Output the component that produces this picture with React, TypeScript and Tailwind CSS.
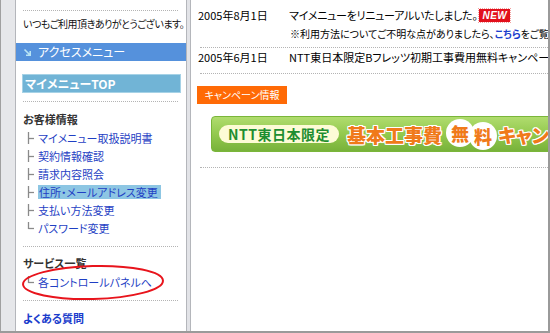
import React from 'react';

const jp = "font-['Noto_Sans_CJK_JP','Noto_Sans',sans-serif] [font-feature-settings:'palt']";

const menuItems = [
  { label: 'マイメニュー取扱説明書' },
  { label: '契約情報確認' },
  { label: '請求内容照会' },
  { label: '住所・メールアドレス変更', active: true },
  { label: '支払い方法変更' },
  { label: 'パスワード変更', last: true },
];

const Tree: React.FC<{ last?: boolean }> = ({ last }) => (
  <svg width="9" height="12" viewBox="0 0 9 12" className="shrink-0">
    <line x1="1.5" y1="0" x2="1.5" y2={last ? 7 : 12} stroke="#8a8a8a" strokeWidth="1.3" />
    <line x1="1.5" y1="6.5" x2="7" y2="6.5" stroke="#8a8a8a" strokeWidth="1.3" />
  </svg>
);

const Dotted: React.FC<{ className?: string }> = ({ className = '' }) => (
  <div className={`h-0 border-t border-dotted border-[#b4b4b4] ${className}`} />
);

const Sidebar: React.FC = () => (
  <div className="relative w-[170px] shrink-0 bg-white flex flex-col">
    <Dotted className="mt-[10px] mx-[7px] mr-[8px]" />
    <p className="mt-[6px] pl-[7px] text-[10px] leading-[14px] tracking-[-0.5px] text-[#111] whitespace-nowrap">
      いつもご利用頂きありがとうございます。
    </p>

    {/* Access menu bar */}
    <div className="mt-[12px] h-[18px] bg-[#5591dc] flex items-center pl-[7px] gap-[6px]">
      <svg width="9" height="9" viewBox="0 0 9 9">
        <path d="M1.5 1.5 L7 7 M3 7.2 H7.2 V3" stroke="#b8e4f4" strokeWidth="1.6" fill="none" />
      </svg>
      <span className="text-[12px] text-white leading-none">アクセスメニュー</span>
    </div>

    <div className="mt-[13px] mx-[6px] mr-[5px] h-[19px] bg-[#71b4d6] border border-[#a6d2e6] flex items-center pl-[2px]">
      <span className="text-[12px] font-bold text-white leading-none">マイメニューTOP</span>
    </div>

    <Dotted className="mt-[8px] mx-[7px] mr-[8px]" />

    <p className="mt-[10px] pl-[7px] text-[11px] leading-[14px] font-bold text-[#333]">お客様情報</p>
    <ul className="mt-[3px] pl-[11px]">
      {menuItems.map((item) => (
        <li key={item.label} className="h-[18px] flex items-center gap-[2px]">
          <Tree last={item.last} />
          <span
            className={`text-[11px] leading-[14px] text-[#1f3fc4] whitespace-nowrap ${
              item.active ? 'bg-[#8dc6e3] pl-[1px] pr-[3px]' : ''
            }`}
          >
            {item.label}
          </span>
        </li>
      ))}
    </ul>

    <Dotted className="mt-[9px] mx-[7px] mr-[8px]" />
    <p className="mt-[7px] pl-[7px] h-[18px] flex items-center text-[11px] font-bold text-[#333]">サービス一覧</p>
    <div className="mt-[1px] pl-[11px] h-[18px] flex items-center gap-[2px]">
      <Tree last />
      <span className="text-[11px] leading-[14px] text-[#1f3fc4] whitespace-nowrap">各コントロールパネルへ</span>
    </div>
    <Dotted className="mt-[9px] mx-[7px] mr-[8px]" />
    <p className="mt-[8px] pl-[7px] h-[18px] flex items-center text-[11px] font-bold text-[#1a3ccc]">よくある質問</p>

    {/* red marker ellipse */}
    <svg className="absolute left-[5px] top-[264px]" width="144" height="37" viewBox="0 0 144 37">
      <ellipse cx="72" cy="18.5" rx="70" ry="16.5" fill="none" stroke="#e8141c" strokeWidth="2" transform="rotate(-1.5 72 18.5)" />
    </svg>
  </div>
);

const outline =
  '[text-shadow:1px_1px_0_#fff,-1px_-1px_0_#fff,1px_-1px_0_#fff,-1px_1px_0_#fff,0_1px_0_#fff,0_-1px_0_#fff,1px_0_0_#fff,-1px_0_0_#fff]';

const Banner: React.FC = () => (
  <div className="mt-[12px] ml-[13px] w-[360px] h-[36px] shrink-0 rounded-l-[4px] border border-[#7ab63a] bg-gradient-to-b from-[#b0dc6e] via-[#93c94e] to-[#78b23a] flex items-center pl-[7px] whitespace-nowrap">
    <div className="h-[18px] px-[9px] shrink-0 rounded-full bg-[#fdfbd6] flex items-center">
      <span className="text-[14px] font-bold text-[#1e8e30] tracking-[0.5px] leading-none">NTT東日本限定</span>
    </div>
    <span className={`ml-[8px] shrink-0 text-[19px] font-black text-[#f07a1a] leading-none ${outline}`}>
      基本工事費
    </span>
    <span className="ml-[4px] shrink-0 w-[28px] h-[28px] rounded-full bg-white flex items-center justify-center text-[18px] font-black text-[#f07a1a] leading-none -mt-[2px]">
      無
    </span>
    <span className="-ml-[5px] shrink-0 w-[28px] h-[28px] rounded-full bg-white flex items-center justify-center text-[18px] font-black text-[#f07a1a] leading-none mt-[4px]">
      料
    </span>
    <span className={`ml-[1px] shrink-0 text-[19px] font-black text-[#f07a1a] leading-none ${outline}`}>
      キャンペーン
    </span>
  </div>
);

const Content: React.FC = () => (
  <div className="flex-1 min-w-0 bg-white overflow-hidden flex flex-col pl-[7px] pt-[6px] text-black">
    <div className="flex h-[18px] items-center whitespace-nowrap text-[11px]">
      <span className="w-[91px] shrink-0">2005年8月1日</span>
      <span className="tracking-[-0.3px]">マイメニューをリニューアルいたしました。</span>
      <span className="ml-[2px] h-[13px] px-[3px] bg-[#e2101c] outline-1 outline-dotted outline-[#f2a0a0] text-white text-[10px] font-black italic leading-[13px] tracking-[0.5px] font-['Liberation_Sans',sans-serif]">
        NEW
      </span>
    </div>
    <div className="flex h-[18px] items-center whitespace-nowrap text-[10px] pl-[92px]">
      ※利用方法についてご不明な点がありましたら、<span className="text-[#1a3ccc] font-bold">こちら</span>をご覧ください。
    </div>
    <Dotted className="mt-[5px] ml-[2px]" />
    <div className="flex h-[18px] items-center whitespace-nowrap text-[11px]">
      <span className="w-[91px] shrink-0">2005年6月1日</span>
      <span>NTT東日本限定Bフレッツ初期工事費用無料キャンペーン</span>
    </div>
    <Dotted className="mt-[7px] ml-[2px]" />

    <div className="mt-[12px] -ml-[1px] w-[90px] h-[18px] bg-[#ff6a06] flex items-center justify-center">
      <span className="text-[10px] text-white leading-none">キャンペーン情報</span>
    </div>

    <Banner />

    <Dotted className="mt-[15px] ml-[2px]" />
  </div>
);

export default function App() {
  return (
    <div className={`w-[550px] h-[333px] flex overflow-hidden border-b-2 border-r-2 border-[#9a9a9a] bg-white ${jp}`}>
      <div className="w-[16px] shrink-0 bg-[#e6e7ea] border-l border-[#a0a0a0] border-r border-r-[#b4b6bb]" />
      <Sidebar />
      <div className="w-[5px] shrink-0 bg-[#e2e3e7] border-l border-[#b4b6bb] border-r border-r-[#b4b6bb]" />
      <Content />
    </div>
  );
}
